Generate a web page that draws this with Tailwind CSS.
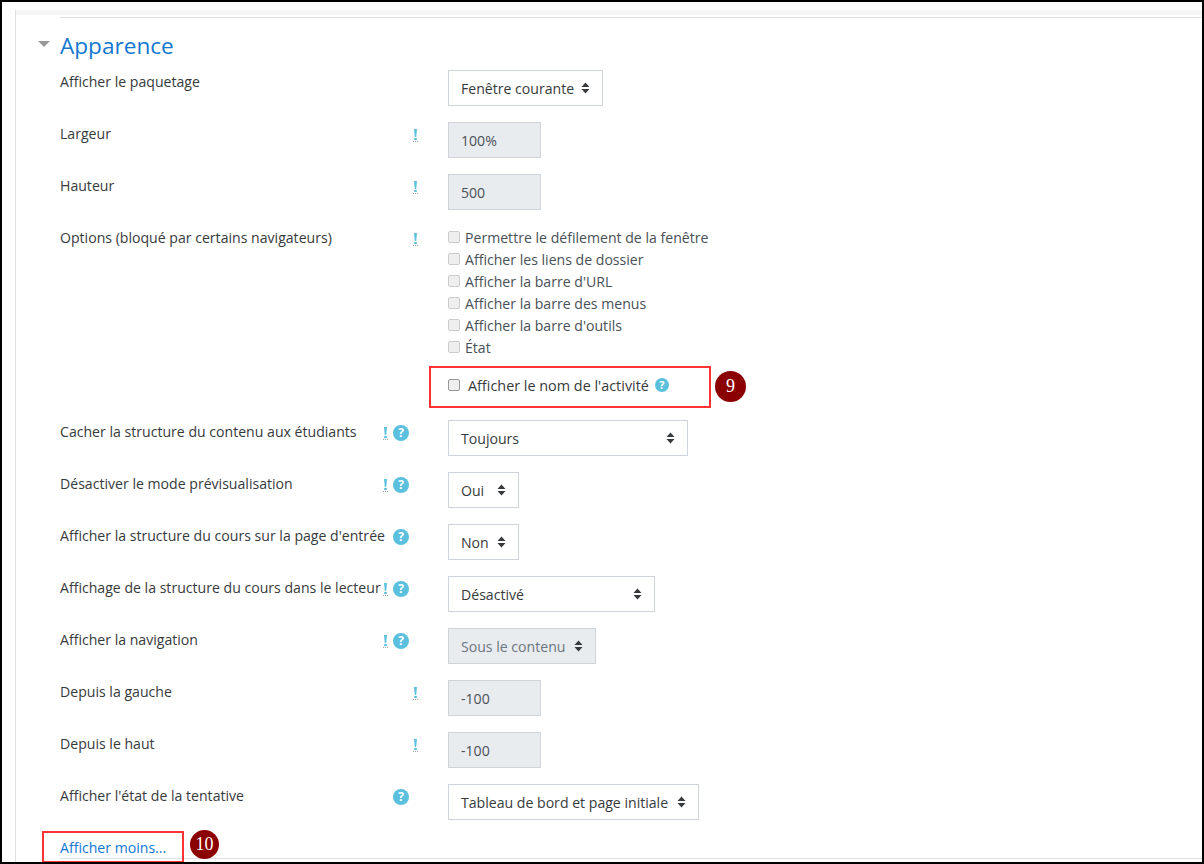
<!DOCTYPE html>
<html lang="fr">
<head>
    <meta charset="UTF-8">
    <title>Apparence</title>
    <script src="https://cdn.jsdelivr.net/npm/@tailwindcss/browser@4"></script>
</head>
<body class="bg-white">
<div class="w-[1204px] h-[864px] border-2 border-black overflow-hidden bg-white font-['Open_Sans',sans-serif] text-[14.1px] text-[#373a3c] leading-[21px]">
    <div class="mt-[8px] ml-[13px] h-[860px] border-l border-l-[#dfdfdf]">
        <div class="h-[5px] bg-[#f6f6f6]"></div>
        <div class="pl-[44px]">
            <div class="mt-[2px] border-t border-t-[#e0e0e0]"></div>

            <!-- Section title -->
            <div class="relative h-[52px] pt-[12px]">
                <svg class="absolute left-[-22px] top-[23px]" width="12" height="6" viewBox="0 0 12 6"><path d="M0 0h12L6 6z" fill="#999"/></svg>
                <h3 class="text-[22.6px] leading-[32px] text-[#1177d1]">Apparence</h3>
            </div>

            <!-- Afficher le paquetage -->
            <div class="flex h-[52px]">
                <label class="w-[320px] pt-[1px] whitespace-nowrap">Afficher le paquetage</label>
                <div class="w-[68px]"></div>
                <div class="h-[36px] w-[155px] border border-[#ced4da] pl-[12px] pr-[12px] flex items-center justify-between">Fenêtre courante
                    <svg width="9" height="12" viewBox="0 0 9 12"><path d="M4.500 0.500 8.500 5H0.500zM0.500 7h8l-4 4.500z" fill="#373a3c"/></svg>
                </div>
            </div>

            <!-- Largeur -->
            <div class="flex h-[52px]">
                <label class="w-[320px] pt-[1px] whitespace-nowrap">Largeur</label>
                <div class="w-[68px] flex pl-[33px] pt-[6px] items-start">
                    <svg width="5" height="14" viewBox="0 0 5 14"><path d="M1 1h3L3.200 9H1.800z" fill="#5bc0de"/><rect x="1.200" y="10" width="2.600" height="2" fill="#5bc0de"/><path d="M0 13.500h5" stroke="#9aa5aa" stroke-dasharray="1 1"/></svg>
                </div>
                <div class="h-[36px] w-[93px] border border-[#ced4da] bg-[#e9ecef] pl-[12px] flex items-center text-[#495057]">100%</div>
            </div>

            <!-- Hauteur -->
            <div class="flex h-[52px]">
                <label class="w-[320px] pt-[1px] whitespace-nowrap">Hauteur</label>
                <div class="w-[68px] flex pl-[33px] pt-[6px] items-start">
                    <svg width="5" height="14" viewBox="0 0 5 14"><path d="M1 1h3L3.200 9H1.800z" fill="#5bc0de"/><rect x="1.200" y="10" width="2.600" height="2" fill="#5bc0de"/><path d="M0 13.500h5" stroke="#9aa5aa" stroke-dasharray="1 1"/></svg>
                </div>
                <div class="h-[36px] w-[93px] border border-[#ced4da] bg-[#e9ecef] pl-[12px] flex items-center text-[#495057]">500</div>
            </div>

            <!-- Options -->
            <div class="flex h-[140px]">
                <label class="w-[320px] pt-[1px] whitespace-nowrap">Options (bloqué par certains navigateurs)</label>
                <div class="w-[68px] flex pl-[33px] pt-[6px] items-start">
                    <svg width="5" height="14" viewBox="0 0 5 14"><path d="M1 1h3L3.200 9H1.800z" fill="#5bc0de"/><rect x="1.200" y="10" width="2.600" height="2" fill="#5bc0de"/><path d="M0 13.500h5" stroke="#9aa5aa" stroke-dasharray="1 1"/></svg>
                </div>
                <div class="flex flex-col">
                    <div class="h-[22px] flex items-center text-[#495057]"><span class="mr-[5px] w-[12px] h-[12px] rounded-[2px] border border-[#ccc] bg-[#eee]"></span>Permettre le défilement de la fenêtre</div>
                    <div class="h-[22px] flex items-center text-[#495057]"><span class="mr-[5px] w-[12px] h-[12px] rounded-[2px] border border-[#ccc] bg-[#eee]"></span>Afficher les liens de dossier</div>
                    <div class="h-[22px] flex items-center text-[#495057]"><span class="mr-[5px] w-[12px] h-[12px] rounded-[2px] border border-[#ccc] bg-[#eee]"></span>Afficher la barre d'URL</div>
                    <div class="h-[22px] flex items-center text-[#495057]"><span class="mr-[5px] w-[12px] h-[12px] rounded-[2px] border border-[#ccc] bg-[#eee]"></span>Afficher la barre des menus</div>
                    <div class="h-[22px] flex items-center text-[#495057]"><span class="mr-[5px] w-[12px] h-[12px] rounded-[2px] border border-[#ccc] bg-[#eee]"></span>Afficher la barre d'outils</div>
                    <div class="h-[22px] flex items-center text-[#495057]"><span class="mr-[5px] w-[12px] h-[12px] rounded-[2px] border border-[#ccc] bg-[#eee]"></span>État</div>
                </div>
            </div>

            <!-- Highlighted row, step 9 -->
            <div class="flex h-[54px] pl-[369px]">
                <div class="h-[42px] w-[282px] border-2 border-[#f33] flex items-center pl-[17px] pb-[4px] text-[14.4px]">
                    <span class="mr-[8px] w-[12px] h-[12px] rounded-[2px] border border-[#999] bg-[#eee]"></span>Afficher le nom de l'activité
                    <span class="ml-[6px] w-[14px] h-[14px] rounded-full bg-[#5bc0de] text-white text-[11px] leading-[14px] font-bold text-center">?</span>
                </div>
                <div class="ml-[4px] mt-[5px] w-[31px] h-[31px] rounded-full bg-[#8b0000] text-white font-['Liberation_Serif',serif] text-[18px] flex items-center justify-center">9</div>
            </div>

            <!-- Cacher la structure -->
            <div class="flex h-[52px]">
                <label class="w-[320px] pt-[1px] whitespace-nowrap">Cacher la structure du contenu aux étudiants</label>
                <div class="w-[68px] flex pl-[3px] pt-[5px] items-start">
                    <svg class="mt-[1px] mr-[5px]" width="5" height="14" viewBox="0 0 5 14"><path d="M1 1h3L3.200 9H1.800z" fill="#5bc0de"/><rect x="1.200" y="10" width="2.600" height="2" fill="#5bc0de"/><path d="M0 13.500h5" stroke="#9aa5aa" stroke-dasharray="1 1"/></svg>
                    <span class="w-[16px] h-[16px] rounded-full bg-[#5bc0de] text-white text-[12px] leading-[16px] font-bold text-center">?</span>
                </div>
                <div class="h-[36px] w-[240px] border border-[#ced4da] pl-[12px] pr-[12px] flex items-center justify-between">Toujours
                    <svg width="9" height="12" viewBox="0 0 9 12"><path d="M4.500 0.500 8.500 5H0.500zM0.500 7h8l-4 4.500z" fill="#373a3c"/></svg>
                </div>
            </div>

            <!-- Désactiver le mode -->
            <div class="flex h-[52px]">
                <label class="w-[320px] pt-[1px] whitespace-nowrap">Désactiver le mode prévisualisation</label>
                <div class="w-[68px] flex pl-[3px] pt-[5px] items-start">
                    <svg class="mt-[1px] mr-[5px]" width="5" height="14" viewBox="0 0 5 14"><path d="M1 1h3L3.200 9H1.800z" fill="#5bc0de"/><rect x="1.200" y="10" width="2.600" height="2" fill="#5bc0de"/><path d="M0 13.500h5" stroke="#9aa5aa" stroke-dasharray="1 1"/></svg>
                    <span class="w-[16px] h-[16px] rounded-full bg-[#5bc0de] text-white text-[12px] leading-[16px] font-bold text-center">?</span>
                </div>
                <div class="h-[36px] w-[71px] border border-[#ced4da] pl-[12px] pr-[12px] flex items-center justify-between">Oui
                    <svg width="9" height="12" viewBox="0 0 9 12"><path d="M4.500 0.500 8.500 5H0.500zM0.500 7h8l-4 4.500z" fill="#373a3c"/></svg>
                </div>
            </div>

            <!-- Structure page d'entrée -->
            <div class="flex h-[52px]">
                <label class="w-[320px] pt-[1px] whitespace-nowrap">Afficher la structure du cours sur la page d'entrée</label>
                <div class="w-[68px] flex pl-[13px] pt-[5px] items-start">
                    <span class="w-[16px] h-[16px] rounded-full bg-[#5bc0de] text-white text-[12px] leading-[16px] font-bold text-center">?</span>
                </div>
                <div class="h-[36px] w-[71px] border border-[#ced4da] pl-[12px] pr-[12px] flex items-center justify-between">Non
                    <svg width="9" height="12" viewBox="0 0 9 12"><path d="M4.500 0.500 8.500 5H0.500zM0.500 7h8l-4 4.500z" fill="#373a3c"/></svg>
                </div>
            </div>

            <!-- Structure lecteur -->
            <div class="flex h-[52px]">
                <label class="w-[320px] pt-[1px] whitespace-nowrap">Affichage de la structure du cours dans le lecteur</label>
                <div class="w-[68px] flex pl-[3px] pt-[5px] items-start">
                    <svg class="mt-[1px] mr-[5px]" width="5" height="14" viewBox="0 0 5 14"><path d="M1 1h3L3.200 9H1.800z" fill="#5bc0de"/><rect x="1.200" y="10" width="2.600" height="2" fill="#5bc0de"/><path d="M0 13.500h5" stroke="#9aa5aa" stroke-dasharray="1 1"/></svg>
                    <span class="w-[16px] h-[16px] rounded-full bg-[#5bc0de] text-white text-[12px] leading-[16px] font-bold text-center">?</span>
                </div>
                <div class="h-[36px] w-[207px] border border-[#ced4da] pl-[12px] pr-[12px] flex items-center justify-between">Désactivé
                    <svg width="9" height="12" viewBox="0 0 9 12"><path d="M4.500 0.500 8.500 5H0.500zM0.500 7h8l-4 4.500z" fill="#373a3c"/></svg>
                </div>
            </div>

            <!-- Afficher la navigation -->
            <div class="flex h-[52px]">
                <label class="w-[320px] pt-[1px] whitespace-nowrap">Afficher la navigation</label>
                <div class="w-[68px] flex pl-[3px] pt-[5px] items-start">
                    <svg class="mt-[1px] mr-[5px]" width="5" height="14" viewBox="0 0 5 14"><path d="M1 1h3L3.200 9H1.800z" fill="#5bc0de"/><rect x="1.200" y="10" width="2.600" height="2" fill="#5bc0de"/><path d="M0 13.500h5" stroke="#9aa5aa" stroke-dasharray="1 1"/></svg>
                    <span class="w-[16px] h-[16px] rounded-full bg-[#5bc0de] text-white text-[12px] leading-[16px] font-bold text-center">?</span>
                </div>
                <div class="h-[36px] w-[148px] border border-[#ced4da] bg-[#e9ecef] text-[#6c757d] pl-[12px] pr-[12px] flex items-center justify-between">Sous le contenu
                    <svg width="9" height="12" viewBox="0 0 9 12"><path d="M4.500 0.500 8.500 5H0.500zM0.500 7h8l-4 4.500z" fill="#373a3c"/></svg>
                </div>
            </div>

            <!-- Depuis la gauche -->
            <div class="flex h-[52px]">
                <label class="w-[320px] pt-[1px] whitespace-nowrap">Depuis la gauche</label>
                <div class="w-[68px] flex pl-[33px] pt-[6px] items-start">
                    <svg width="5" height="14" viewBox="0 0 5 14"><path d="M1 1h3L3.200 9H1.800z" fill="#5bc0de"/><rect x="1.200" y="10" width="2.600" height="2" fill="#5bc0de"/><path d="M0 13.500h5" stroke="#9aa5aa" stroke-dasharray="1 1"/></svg>
                </div>
                <div class="h-[36px] w-[93px] border border-[#ced4da] bg-[#e9ecef] pl-[12px] flex items-center text-[#495057]">-100</div>
            </div>

            <!-- Depuis le haut -->
            <div class="flex h-[52px]">
                <label class="w-[320px] pt-[1px] whitespace-nowrap">Depuis le haut</label>
                <div class="w-[68px] flex pl-[33px] pt-[6px] items-start">
                    <svg width="5" height="14" viewBox="0 0 5 14"><path d="M1 1h3L3.200 9H1.800z" fill="#5bc0de"/><rect x="1.200" y="10" width="2.600" height="2" fill="#5bc0de"/><path d="M0 13.500h5" stroke="#9aa5aa" stroke-dasharray="1 1"/></svg>
                </div>
                <div class="h-[36px] w-[93px] border border-[#ced4da] bg-[#e9ecef] pl-[12px] flex items-center text-[#495057]">-100</div>
            </div>

            <!-- État de la tentative -->
            <div class="flex h-[47px]">
                <label class="w-[320px] pt-[1px] whitespace-nowrap">Afficher l'état de la tentative</label>
                <div class="w-[68px] flex pl-[13px] pt-[5px] items-start">
                    <span class="w-[16px] h-[16px] rounded-full bg-[#5bc0de] text-white text-[12px] leading-[16px] font-bold text-center">?</span>
                </div>
                <div class="h-[36px] w-[251px] border border-[#ced4da] pl-[12px] pr-[12px] flex items-center justify-between">Tableau de bord et page initiale
                    <svg width="9" height="12" viewBox="0 0 9 12"><path d="M4.500 0.500 8.500 5H0.500zM0.500 7h8l-4 4.500z" fill="#373a3c"/></svg>
                </div>
            </div>

            <!-- Afficher moins, step 10 -->
            <div class="relative border-b border-b-[#dee2e6] h-[28px]">
                <div class="absolute left-[-18px] top-0 w-[142px] h-[32px] border-2 border-[#f33] pl-[16px] pt-[4px]">
                    <a class="text-[#1177d1]" href="#">Afficher moins...</a>
                </div>
                <div class="absolute left-[130px] top-[-1px] w-[29px] h-[29px] rounded-full bg-[#8b0000] text-white font-['Liberation_Serif',serif] text-[18px] flex items-center justify-center">10</div>
            </div>
        </div>
    </div>
</div>
</body>
</html>
